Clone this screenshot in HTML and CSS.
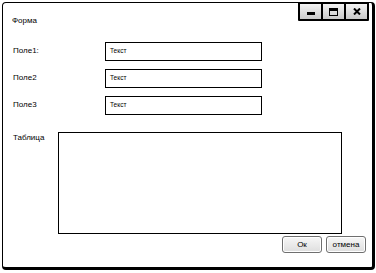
FILE: index.html
```html
<!DOCTYPE html>
<html lang="ru">
<head>
<meta charset="utf-8">
<title>Форма</title>
<link rel="stylesheet" href="styles.css">
</head>
<body>
<div class="window">
  <div class="caption-buttons">
    <div class="cap-btn"><svg width="8" height="3" viewBox="0 0 8 3"><rect x="0" y="0" width="8" height="3" fill="#000"/></svg></div>
    <div class="cap-btn"><svg width="9" height="8" viewBox="0 0 9 8"><rect x="0.5" y="0.5" width="8" height="7" fill="none" stroke="#000"/><rect x="0" y="0" width="9" height="3" fill="#000"/></svg></div>
    <div class="cap-btn"><svg width="8" height="7" viewBox="0 0 8 7"><path d="M1 0.5 L7 6.5 M7 0.5 L1 6.5" stroke="#000" stroke-width="2" fill="none"/></svg></div>
  </div>
  <div class="title">Форма</div>
  <div class="fields">
    <div class="row"><span class="label">Поле1:</span><div class="input">Текст</div></div>
    <div class="row"><span class="label">Поле2</span><div class="input">Текст</div></div>
    <div class="row"><span class="label">Поле3</span><div class="input">Текст</div></div>
  </div>
  <div class="table-row">
    <span class="label">Таблица</span>
    <div class="table"></div>
  </div>
  <div class="actions">
    <button class="btn">Ок</button>
    <button class="btn">отмена</button>
  </div>
</div>
</body>
</html>
```

FILE: styles.css
```css
html, body {
  margin: 0;
  padding: 0;
  background: #fff;
}
body {
  font-family: "Liberation Sans", Arial, sans-serif;
  font-size: 8px;
  color: #000;
}
.window {
  position: relative;
  box-sizing: border-box;
  margin: 2px 0 0 2px;
  width: 373px;
  height: 268px;
  border-style: solid;
  border-color: #000;
  border-width: 1px 3px 3px 1px;
  border-radius: 4px;
  display: flex;
  flex-direction: column;
}
.caption-buttons {
  position: absolute;
  top: -1px;
  right: 3px;
  display: flex;
  gap: 2px;
  padding: 2px;
  background: #000;
  border-radius: 1px;
}
.cap-btn {
  width: 21px;
  height: 15px;
  background: linear-gradient(#f4f4f4, #c9c9c9);
  display: flex;
  align-items: center;
  justify-content: center;
}
.cap-btn:first-child svg {
  margin-top: 4px;
}
.title {
  margin: 13px 0 0 9px;
  line-height: 10px;
  height: 10px;
}
.fields {
  display: flex;
  flex-direction: column;
  gap: 8px;
  margin-top: 16px;
  padding-left: 10px;
}
.row {
  display: flex;
  align-items: center;
}
.row .label {
  width: 92px;
  margin-top: -2px;
}
.input {
  box-sizing: border-box;
  width: 157px;
  height: 19px;
  border: 1.5px solid #000;
  font-size: 6.5px;
  line-height: 16px;
  padding-left: 4px;
}
.table-row {
  display: flex;
  margin-top: 17px;
  padding-left: 10px;
}
.table-row .label {
  width: 45px;
  margin-top: 1px;
}
.table {
  box-sizing: border-box;
  width: 284px;
  height: 102px;
  border: 1px solid #000;
}
.actions {
  display: flex;
  justify-content: flex-end;
  gap: 4px;
  margin-top: 2px;
  padding-right: 6px;
}
.btn {
  box-sizing: border-box;
  width: 40px;
  height: 17px;
  padding: 0;
  border: 1px solid #6f6f6f;
  border-radius: 3px;
  background: linear-gradient(#f7f7f7, #dedede);
  font-family: "Liberation Sans", Arial, sans-serif;
  font-size: 8px;
  color: #000;
  box-shadow: inset 0 0 0 1px #fff;
}
```
